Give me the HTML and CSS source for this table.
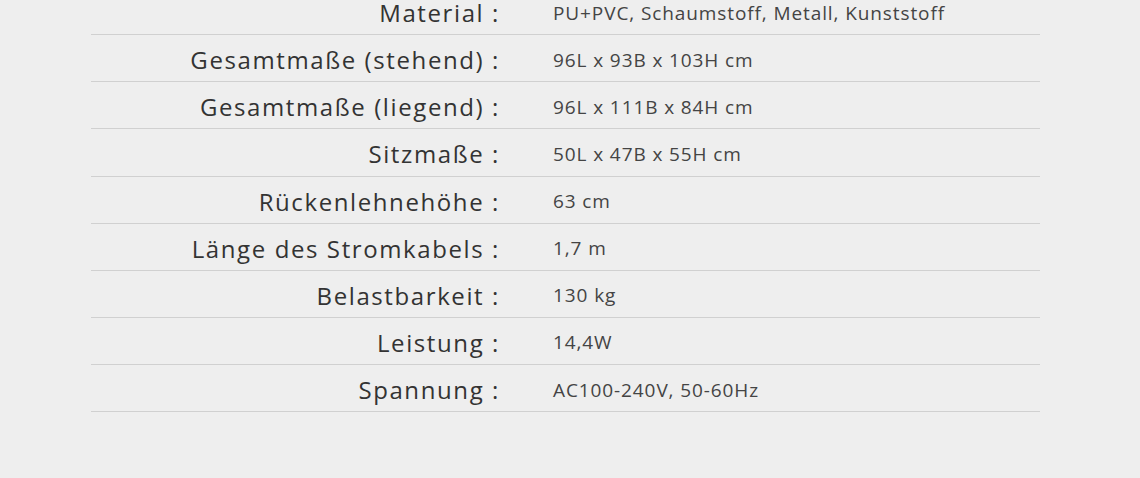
FILE: index.html
```html
<!DOCTYPE html>
<html lang="de">
<head>
<meta charset="utf-8">
<link rel="stylesheet" href="styles.css">
</head>
<body>
<div class="specs">
  <div class="row"><div class="label">Material :</div><div class="value">PU+PVC, Schaumstoff, Metall, Kunststoff</div></div>
  <div class="row"><div class="label">Gesamtmaße (stehend) :</div><div class="value">96L x 93B x 103H cm</div></div>
  <div class="row"><div class="label">Gesamtmaße (liegend) :</div><div class="value">96L x 111B x 84H cm</div></div>
  <div class="row"><div class="label">Sitzmaße :</div><div class="value">50L x 47B x 55H cm</div></div>
  <div class="row"><div class="label">Rückenlehnehöhe :</div><div class="value">63 cm</div></div>
  <div class="row"><div class="label">Länge des Stromkabels :</div><div class="value">1,7 m</div></div>
  <div class="row"><div class="label">Belastbarkeit :</div><div class="value">130 kg</div></div>
  <div class="row"><div class="label">Leistung :</div><div class="value">14,4W</div></div>
  <div class="row"><div class="label">Spannung :</div><div class="value">AC100-240V, 50-60Hz</div></div>
</div>
</body>
</html>
```
FILE: styles.css
```css
html, body {
  margin: 0;
  padding: 0;
  background: #eeeeee;
}
body {
  font-family: "Open Sans", "Lato", sans-serif;
  overflow: hidden;
}
.specs {
  margin: -12px 0 0 91px;
  width: 949px;
  display: flex;
  flex-direction: column;
}
.row {
  display: flex;
  align-items: center;
  padding-top: 3px;
  box-sizing: border-box;
  height: 47.125px;
  border-bottom: 1px solid #d0d0d0;
}
.label {
  width: 409px;
  flex: none;
  text-align: right;
  font-size: 24px;
  color: #333333;
  letter-spacing: 1.6px;
}
.value {
  margin-left: 53px;
  font-size: 19px;
  color: #444444;
  letter-spacing: 0.9px;
}
```
